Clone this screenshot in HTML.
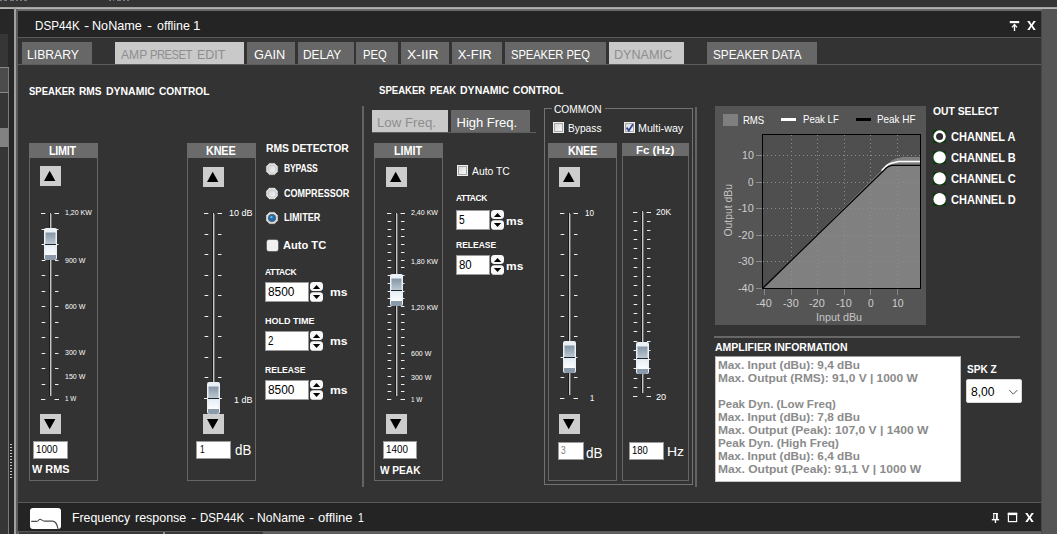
<!DOCTYPE html>
<html lang="en"><head><meta charset="utf-8"><title>DSP44K - NoName - offline 1</title>
<style>
html,body{margin:0;padding:0;background:#333333}
body{width:1057px;height:534px;overflow:hidden;background:#333333;position:relative;font-family:"Liberation Sans", sans-serif}
div,svg,span.t{position:absolute;display:block}
span.t{white-space:nowrap;transform-origin:0 50%}
</style></head><body>
<svg style="left:0;top:0" width="0" height="0"><defs><linearGradient id="tg1" x1="0" y1="0" x2="0" y2="1"><stop offset="0" stop-color="#8494a4"/><stop offset="1" stop-color="#bcc8d2"/></linearGradient><linearGradient id="tg2" x1="0" y1="0" x2="0" y2="1"><stop offset="0" stop-color="#e4edf5"/><stop offset="1" stop-color="#fbfdfe"/></linearGradient><linearGradient id="rg" x1="0" y1="0" x2="1" y2="1"><stop offset="0" stop-color="#c9d1d8"/><stop offset="0.55" stop-color="#e3e7ea"/><stop offset="1" stop-color="#f6f7f8"/></linearGradient></defs></svg>
<div style="left:0px;top:0px;width:1057px;height:7px;background:#343434;"></div>
<div style="left:0px;top:0px;width:2px;height:1px;background:#777d86;"></div>
<div style="left:4px;top:0px;width:3px;height:1px;background:#777d86;"></div>
<div style="left:10px;top:0px;width:4px;height:1px;background:#777d86;"></div>
<div style="left:16px;top:0px;width:2px;height:1px;background:#777d86;"></div>
<div style="left:20px;top:0px;width:2px;height:1px;background:#777d86;"></div>
<div style="left:24px;top:0px;width:3px;height:1px;background:#777d86;"></div>
<div style="left:109px;top:0px;width:2px;height:1px;background:#777d86;"></div>
<div style="left:113px;top:0px;width:1px;height:1px;background:#777d86;"></div>
<div style="left:117px;top:0px;width:4px;height:1px;background:#777d86;"></div>
<div style="left:123px;top:0px;width:2px;height:1px;background:#777d86;"></div>
<div style="left:127px;top:0px;width:2px;height:1px;background:#777d86;"></div>
<div style="left:0px;top:9px;width:14px;height:525px;background:#272727;"></div>
<div style="left:0px;top:34px;width:8px;height:500px;background:#363636;"></div>
<div style="left:8px;top:67px;width:1px;height:467px;background:#7a7a7a;"></div>
<div style="left:0px;top:67px;width:9px;height:1px;background:#8a8a8a;"></div>
<div style="left:0px;top:68px;width:8px;height:24px;background:#4c4c4c;"></div>
<div style="left:0px;top:92px;width:9px;height:1px;background:#8a8a8a;"></div>
<div style="left:0px;top:128px;width:8px;height:19px;background:#828282;"></div>
<div style="left:10px;top:444px;width:2px;height:1px;background:#c8c8c8;"></div>
<div style="left:10px;top:447px;width:2px;height:1px;background:#c8c8c8;"></div>
<div style="left:10px;top:450px;width:2px;height:1px;background:#c8c8c8;"></div>
<div style="left:10px;top:453px;width:2px;height:1px;background:#c8c8c8;"></div>
<div style="left:10px;top:456px;width:2px;height:1px;background:#c8c8c8;"></div>
<div style="left:10px;top:459px;width:2px;height:1px;background:#c8c8c8;"></div>
<div style="left:10px;top:462px;width:2px;height:1px;background:#c8c8c8;"></div>
<div style="left:10px;top:465px;width:2px;height:1px;background:#c8c8c8;"></div>
<div style="left:10px;top:468px;width:2px;height:1px;background:#c8c8c8;"></div>
<div style="left:10px;top:471px;width:2px;height:1px;background:#c8c8c8;"></div>
<div style="left:10px;top:474px;width:2px;height:1px;background:#c8c8c8;"></div>
<div style="left:10px;top:477px;width:2px;height:1px;background:#c8c8c8;"></div>
<div style="left:0px;top:7px;width:1057px;height:1px;background:#a4a4a4;"></div>
<div style="left:0px;top:8px;width:1057px;height:1px;background:#b4b4b4;"></div>
<div style="left:14px;top:7px;width:2px;height:527px;background:#a0a0a0;"></div>
<div style="left:16px;top:9px;width:1026px;height:2px;background:#686868;"></div>
<div style="left:16px;top:9px;width:2px;height:525px;background:#5c5c5c;"></div>
<div style="left:1041px;top:11px;width:1px;height:523px;background:#474747;"></div>
<div style="left:1042px;top:9px;width:15px;height:525px;background:#555555;"></div>
<div style="left:18px;top:11px;width:1023px;height:26px;background:#242424;"></div>
<div style="left:18px;top:37px;width:1023px;height:1px;background:#5a5a5a;"></div>
<div style="left:18px;top:38px;width:1023px;height:464px;background:#333333;"></div>
<div style="left:18px;top:502px;width:1023px;height:1px;background:#5a5a5a;"></div>
<div style="left:18px;top:503px;width:1023px;height:28px;background:#242424;"></div>
<div style="left:18px;top:531px;width:1023px;height:1px;background:#585858;"></div>
<div style="left:18px;top:532px;width:1023px;height:2px;background:#606060;"></div>
<div style="left:18px;top:532px;width:145px;height:2px;background:#3a3a3a;"></div>
<div style="left:165px;top:532px;width:98px;height:2px;background:#3a3a3a;"></div>
<div style="left:18px;top:532px;width:1px;height:2px;background:#6a6a6a;"></div>
<div style="left:163px;top:532px;width:2px;height:2px;background:#8a8a8a;"></div>
<span class="t" style="left:34.60px;top:18px;font-size:13px;line-height:15px;height:15px;color:#fff;transform:scaleX(0.8965);">DSP44K</span>
<span class="t" style="left:84.30px;top:18px;font-size:13px;line-height:15px;height:15px;color:#fff;transform:scaleX(1.2000);">-</span>
<span class="t" style="left:92.43px;top:18px;font-size:13px;line-height:15px;height:15px;color:#fff;transform:scaleX(0.9707);">NoName</span>
<span class="t" style="left:147.20px;top:18px;font-size:13px;line-height:15px;height:15px;color:#fff;transform:scaleX(1.1750);">-</span>
<span class="t" style="left:156.60px;top:18px;font-size:13px;line-height:15px;height:15px;color:#fff;transform:scaleX(0.9554);">offline</span>
<span class="t" style="left:193.30px;top:18px;font-size:13px;line-height:15px;height:15px;color:#fff;transform:scaleX(1.0286);">1</span>
<span class="t" style="left:71.65px;top:510px;font-size:13px;line-height:15px;height:15px;color:#fff;transform:scaleX(0.9471);">Frequency</span>
<span class="t" style="left:135.10px;top:510px;font-size:13px;line-height:15px;height:15px;color:#fff;transform:scaleX(0.9578);">response</span>
<span class="t" style="left:191.30px;top:510px;font-size:13px;line-height:15px;height:15px;color:#fff;transform:scaleX(1.2250);">-</span>
<span class="t" style="left:199.82px;top:510px;font-size:13px;line-height:15px;height:15px;color:#fff;transform:scaleX(0.8843);">DSP44K</span>
<span class="t" style="left:249.20px;top:510px;font-size:13px;line-height:15px;height:15px;color:#fff;transform:scaleX(1.1750);">-</span>
<span class="t" style="left:257.07px;top:510px;font-size:13px;line-height:15px;height:15px;color:#fff;transform:scaleX(0.9328);">NoName</span>
<span class="t" style="left:309.20px;top:510px;font-size:13px;line-height:15px;height:15px;color:#fff;transform:scaleX(1.2000);">-</span>
<span class="t" style="left:318.30px;top:510px;font-size:13px;line-height:15px;height:15px;color:#fff;transform:scaleX(1.0051);">offline</span>
<span class="t" style="left:358.40px;top:510px;font-size:13px;line-height:15px;height:15px;color:#fff;transform:scaleX(0.8000);">1</span>
<svg style="left:30px;top:508px" width="31" height="21" viewBox="0 0 31 21"><rect x="0" y="0" width="31" height="21" rx="3" ry="3" fill="#fff"/><path d="M1.2 13.4 H6.8 C8.6 13.4 8.6 11.3 10 11.3 C11.6 11.3 12.4 13.1 14.4 13.1 H22.6 C26 13.1 27 16.5 28.1 21" fill="none" stroke="#4a4a4a" stroke-width="1.1"/></svg>
<svg style="left:1008px;top:19px" width="14" height="14" viewBox="0 0 14 14"><rect x="1.8" y="2" width="9.4" height="2.2" fill="#fff"/><path d="M4.0 8.4 L6.5 5.6 L9.0 8.4" fill="none" stroke="#fff" stroke-width="1.3"/><rect x="5.8" y="5.6" width="1.4" height="6.4" fill="#fff"/></svg>
<svg style="left:1027.2px;top:21px" width="9" height="9.1" viewBox="0 0 8.6 9"><polygon points="0,0 2.3,0 4.3,3.1 6.3,0 8.6,0 5.45,4.45 8.6,9 6.3,9 4.3,5.8 2.3,9 0,9 3.15,4.45" fill="#fff"/></svg>
<svg style="left:989px;top:511px" width="14" height="14" viewBox="0 0 14 14"><rect x="4.2" y="2" width="4.6" height="1.1" fill="#fff"/><rect x="4.2" y="2" width="1.1" height="6.4" fill="#fff"/><rect x="6.9" y="2" width="1.9" height="6.4" fill="#fff"/><rect x="2.8" y="8" width="7.3" height="1.4" fill="#fff"/><rect x="5.8" y="9" width="1.3" height="3" fill="#fff"/></svg>
<svg style="left:1006px;top:511px" width="14" height="14" viewBox="0 0 14 14"><rect x="2.4" y="2.4" width="8.2" height="8.2" fill="none" stroke="#fff" stroke-width="1.2"/><rect x="1.8" y="1.8" width="9.4" height="2.3" fill="#fff"/></svg>
<svg style="left:1025px;top:513px" width="9" height="9.2" viewBox="0 0 8.6 9"><polygon points="0,0 2.3,0 4.3,3.1 6.3,0 8.6,0 5.45,4.45 8.6,9 6.3,9 4.3,5.8 2.3,9 0,9 3.15,4.45" fill="#fff"/></svg>
<div style="left:18px;top:64px;width:1023px;height:1px;background:#5e5e5e;"></div>
<div style="left:22px;top:42px;width:70px;height:22px;background:#676767;"></div>
<span class="t" style="left:27.46px;top:47px;font-size:13px;line-height:15px;height:15px;color:#fff;transform:scaleX(0.9356);">LIBRARY</span>
<div style="left:115px;top:42px;width:129px;height:22px;background:#c9c9c9;"></div>
<span class="t" style="left:121.20px;top:47px;font-size:13px;line-height:15px;height:15px;color:#8e8e8e;transform:scaleX(0.9309);">AMP</span>
<span class="t" style="left:149.84px;top:47px;font-size:13px;line-height:15px;height:15px;color:#8e8e8e;letter-spacing:-0.563px;transform:scaleX(0.8600);">PRESET</span>
<span class="t" style="left:197.44px;top:47px;font-size:13px;line-height:15px;height:15px;color:#8e8e8e;transform:scaleX(0.9557);">EDIT</span>
<div style="left:247px;top:42px;width:48px;height:22px;background:#676767;"></div>
<span class="t" style="left:253.50px;top:47px;font-size:13px;line-height:15px;height:15px;color:#fff;transform:scaleX(0.9811);">GAIN</span>
<div style="left:298px;top:42px;width:56px;height:22px;background:#676767;"></div>
<span class="t" style="left:303.08px;top:47px;font-size:13px;line-height:15px;height:15px;color:#fff;transform:scaleX(0.9172);">DELAY</span>
<div style="left:356px;top:42px;width:42px;height:22px;background:#676767;"></div>
<span class="t" style="left:362.53px;top:47px;font-size:13px;line-height:15px;height:15px;color:#fff;transform:scaleX(0.8655);">PEQ</span>
<div style="left:401px;top:42px;width:48px;height:22px;background:#676767;"></div>
<span class="t" style="left:406.80px;top:47px;font-size:13px;line-height:15px;height:15px;color:#fff;transform:scaleX(1.0676);">X-IIR</span>
<div style="left:452px;top:42px;width:50px;height:22px;background:#676767;"></div>
<span class="t" style="left:457.70px;top:47px;font-size:13px;line-height:15px;height:15px;color:#fff;">X-FIR</span>
<div style="left:505px;top:42px;width:101px;height:22px;background:#676767;"></div>
<span class="t" style="left:510.80px;top:47px;font-size:13px;line-height:15px;height:15px;color:#fff;letter-spacing:-0.074px;transform:scaleX(0.8600);">SPEAKER PEQ</span>
<div style="left:609px;top:42px;width:75px;height:22px;background:#c9c9c9;"></div>
<span class="t" style="left:614.23px;top:47px;font-size:13px;line-height:15px;height:15px;color:#8e8e8e;transform:scaleX(0.9700);">DYNAMIC</span>
<div style="left:707px;top:42px;width:110px;height:22px;background:#676767;"></div>
<span class="t" style="left:713.20px;top:47px;font-size:13px;line-height:15px;height:15px;color:#fff;transform:scaleX(0.9052);">SPEAKER DATA</span>
<span class="t" style="left:28.70px;top:85px;font-size:11px;line-height:12px;height:12px;color:#fff;font-weight:bold;transform:scaleX(0.8641);">SPEAKER</span>
<span class="t" style="left:78.90px;top:85px;font-size:11px;line-height:12px;height:12px;color:#fff;font-weight:bold;transform:scaleX(0.9250);">RMS</span>
<span class="t" style="left:105.70px;top:85px;font-size:11px;line-height:12px;height:12px;color:#fff;font-weight:bold;transform:scaleX(0.9516);">DYNAMIC</span>
<span class="t" style="left:158.70px;top:85px;font-size:11px;line-height:12px;height:12px;color:#fff;font-weight:bold;transform:scaleX(0.9275);">CONTROL</span>
<div style="left:29px;top:143px;width:69px;height:338px;background:transparent;border:1px solid #666;box-sizing:border-box"></div>
<div style="left:29px;top:143px;width:69px;height:15px;background:#6b6b6b;"></div>
<span class="t" style="left:49.00px;top:144px;font-size:12.6px;line-height:14px;height:14px;color:#fff;font-weight:bold;letter-spacing:-0.301px;transform:scaleX(0.8600);">LIMIT</span>
<div style="left:40px;top:166px;width:21px;height:20px;background:#cdcdcd;"></div>
<svg style="left:40px;top:166px" width="21" height="20"><polygon points="4.0,15 15.4,15 9.7,4.8" fill="#000"/></svg>
<div style="left:41px;top:213px;width:4px;height:1px;background:#f0f0f0;"></div>
<div style="left:45px;top:213px;width:1px;height:1px;background:#707070;"></div>
<div style="left:54px;top:213px;width:1px;height:1px;background:#909090;"></div>
<div style="left:55px;top:213px;width:4px;height:1px;background:#f0f0f0;"></div>
<div style="left:41px;top:229px;width:1px;height:1px;background:#808080;"></div>
<div style="left:42px;top:229px;width:3px;height:1px;background:#f0f0f0;"></div>
<div style="left:45px;top:229px;width:1px;height:1px;background:#686868;"></div>
<div style="left:55px;top:229px;width:3px;height:1px;background:#f0f0f0;"></div>
<div style="left:58px;top:229px;width:1px;height:1px;background:#8c8c8c;"></div>
<div style="left:41px;top:244px;width:1px;height:1px;background:#808080;"></div>
<div style="left:42px;top:244px;width:3px;height:1px;background:#f0f0f0;"></div>
<div style="left:45px;top:244px;width:1px;height:1px;background:#686868;"></div>
<div style="left:55px;top:244px;width:3px;height:1px;background:#f0f0f0;"></div>
<div style="left:58px;top:244px;width:1px;height:1px;background:#8c8c8c;"></div>
<div style="left:41px;top:260px;width:1px;height:1px;background:#808080;"></div>
<div style="left:42px;top:260px;width:3px;height:1px;background:#f0f0f0;"></div>
<div style="left:45px;top:260px;width:1px;height:1px;background:#686868;"></div>
<div style="left:55px;top:260px;width:3px;height:1px;background:#f0f0f0;"></div>
<div style="left:58px;top:260px;width:1px;height:1px;background:#8c8c8c;"></div>
<div style="left:41px;top:275px;width:1px;height:1px;background:#808080;"></div>
<div style="left:42px;top:275px;width:3px;height:1px;background:#f0f0f0;"></div>
<div style="left:45px;top:275px;width:1px;height:1px;background:#686868;"></div>
<div style="left:55px;top:275px;width:3px;height:1px;background:#f0f0f0;"></div>
<div style="left:58px;top:275px;width:1px;height:1px;background:#8c8c8c;"></div>
<div style="left:41px;top:291px;width:1px;height:1px;background:#808080;"></div>
<div style="left:42px;top:291px;width:3px;height:1px;background:#f0f0f0;"></div>
<div style="left:45px;top:291px;width:1px;height:1px;background:#686868;"></div>
<div style="left:55px;top:291px;width:3px;height:1px;background:#f0f0f0;"></div>
<div style="left:58px;top:291px;width:1px;height:1px;background:#8c8c8c;"></div>
<div style="left:41px;top:306px;width:1px;height:1px;background:#808080;"></div>
<div style="left:42px;top:306px;width:3px;height:1px;background:#f0f0f0;"></div>
<div style="left:45px;top:306px;width:1px;height:1px;background:#686868;"></div>
<div style="left:55px;top:306px;width:3px;height:1px;background:#f0f0f0;"></div>
<div style="left:58px;top:306px;width:1px;height:1px;background:#8c8c8c;"></div>
<div style="left:41px;top:322px;width:1px;height:1px;background:#808080;"></div>
<div style="left:42px;top:322px;width:3px;height:1px;background:#f0f0f0;"></div>
<div style="left:45px;top:322px;width:1px;height:1px;background:#686868;"></div>
<div style="left:55px;top:322px;width:3px;height:1px;background:#f0f0f0;"></div>
<div style="left:58px;top:322px;width:1px;height:1px;background:#8c8c8c;"></div>
<div style="left:41px;top:337px;width:1px;height:1px;background:#808080;"></div>
<div style="left:42px;top:337px;width:3px;height:1px;background:#f0f0f0;"></div>
<div style="left:45px;top:337px;width:1px;height:1px;background:#686868;"></div>
<div style="left:55px;top:337px;width:3px;height:1px;background:#f0f0f0;"></div>
<div style="left:58px;top:337px;width:1px;height:1px;background:#8c8c8c;"></div>
<div style="left:41px;top:353px;width:1px;height:1px;background:#808080;"></div>
<div style="left:42px;top:353px;width:3px;height:1px;background:#f0f0f0;"></div>
<div style="left:45px;top:353px;width:1px;height:1px;background:#686868;"></div>
<div style="left:55px;top:353px;width:3px;height:1px;background:#f0f0f0;"></div>
<div style="left:58px;top:353px;width:1px;height:1px;background:#8c8c8c;"></div>
<div style="left:41px;top:368px;width:1px;height:1px;background:#808080;"></div>
<div style="left:42px;top:368px;width:3px;height:1px;background:#f0f0f0;"></div>
<div style="left:45px;top:368px;width:1px;height:1px;background:#686868;"></div>
<div style="left:55px;top:368px;width:3px;height:1px;background:#f0f0f0;"></div>
<div style="left:58px;top:368px;width:1px;height:1px;background:#8c8c8c;"></div>
<div style="left:41px;top:384px;width:1px;height:1px;background:#808080;"></div>
<div style="left:42px;top:384px;width:3px;height:1px;background:#f0f0f0;"></div>
<div style="left:45px;top:384px;width:1px;height:1px;background:#686868;"></div>
<div style="left:55px;top:384px;width:3px;height:1px;background:#f0f0f0;"></div>
<div style="left:58px;top:384px;width:1px;height:1px;background:#8c8c8c;"></div>
<div style="left:41px;top:399px;width:4px;height:1px;background:#f0f0f0;"></div>
<div style="left:45px;top:399px;width:1px;height:1px;background:#707070;"></div>
<div style="left:54px;top:399px;width:1px;height:1px;background:#909090;"></div>
<div style="left:55px;top:399px;width:4px;height:1px;background:#f0f0f0;"></div>
<div style="left:49px;top:213px;width:1px;height:183.0px;background:#1a1a1a;"></div>
<div style="left:50px;top:213px;width:1px;height:183.0px;background:#c6c6c6;"></div>
<div style="left:51px;top:214px;width:1px;height:182.0px;background:#6e6e6e;"></div>
<svg style="left:44px;top:228px" width="13" height="32" viewBox="0 0 13 32"><rect x="0" y="0" width="13" height="32" rx="2" ry="2" fill="#e9f0f6"/><rect x="1.5" y="4.5" width="10" height="11.5" fill="url(#tg1)"/><rect x="1" y="16" width="11" height="1" fill="#20262c"/><rect x="1.5" y="17" width="10" height="10" fill="url(#tg2)"/><path d="M1 27 H12 V30 Q12 32 10 32 H3 Q1 32 1 30 Z" fill="#8a9aab"/></svg>
<span class="t" style="left:64.50px;top:208px;font-size:7.2px;line-height:9px;height:9px;color:#fff;transform:scaleX(0.9719);">1,20 KW</span>
<span class="t" style="left:64.50px;top:256px;font-size:7.2px;line-height:9px;height:9px;color:#fff;transform:scaleX(0.9767);">900 W</span>
<span class="t" style="left:64.50px;top:302px;font-size:7.2px;line-height:9px;height:9px;color:#fff;transform:scaleX(0.9767);">600 W</span>
<span class="t" style="left:64.50px;top:348px;font-size:7.2px;line-height:9px;height:9px;color:#fff;transform:scaleX(0.9767);">300 W</span>
<span class="t" style="left:64.50px;top:372px;font-size:7.2px;line-height:9px;height:9px;color:#fff;transform:scaleX(0.9767);">150 W</span>
<span class="t" style="left:64.50px;top:394px;font-size:7.2px;line-height:9px;height:9px;color:#fff;transform:scaleX(0.8850);">1 W</span>
<div style="left:40px;top:414px;width:21px;height:20px;background:#cdcdcd;"></div>
<svg style="left:40px;top:414px" width="21" height="20"><polygon points="4.0,5 15.4,5 9.7,15.2" fill="#000"/></svg>
<div style="left:33px;top:441px;width:35px;height:18px;background:#fff;border:1px solid #9a9a9a;box-sizing:border-box"></div>
<span class="t" style="left:36.00px;top:443px;font-size:10.5px;line-height:12px;height:12px;color:#000;transform:scaleX(0.9269);">1000</span>
<span class="t" style="left:32.00px;top:463px;font-size:11px;line-height:12px;height:12px;color:#fff;font-weight:bold;transform:scaleX(0.9881);">W RMS</span>
<div style="left:187px;top:143px;width:69px;height:338px;background:transparent;border:1px solid #666;box-sizing:border-box"></div>
<div style="left:187px;top:143px;width:69px;height:15px;background:#6b6b6b;"></div>
<span class="t" style="left:206.30px;top:144px;font-size:12.6px;line-height:14px;height:14px;color:#fff;font-weight:bold;letter-spacing:-0.173px;transform:scaleX(0.8600);">KNEE</span>
<div style="left:203px;top:167px;width:21px;height:20px;background:#cdcdcd;"></div>
<svg style="left:203px;top:167px" width="21" height="20"><polygon points="4.0,15 15.4,15 9.7,4.8" fill="#000"/></svg>
<div style="left:204px;top:213px;width:4px;height:1px;background:#f0f0f0;"></div>
<div style="left:208px;top:213px;width:1px;height:1px;background:#707070;"></div>
<div style="left:217px;top:213px;width:1px;height:1px;background:#909090;"></div>
<div style="left:218px;top:213px;width:4px;height:1px;background:#f0f0f0;"></div>
<div style="left:204px;top:234px;width:1px;height:1px;background:#808080;"></div>
<div style="left:205px;top:234px;width:3px;height:1px;background:#f0f0f0;"></div>
<div style="left:208px;top:234px;width:1px;height:1px;background:#686868;"></div>
<div style="left:218px;top:234px;width:3px;height:1px;background:#f0f0f0;"></div>
<div style="left:221px;top:234px;width:1px;height:1px;background:#8c8c8c;"></div>
<div style="left:204px;top:254px;width:1px;height:1px;background:#808080;"></div>
<div style="left:205px;top:254px;width:3px;height:1px;background:#f0f0f0;"></div>
<div style="left:208px;top:254px;width:1px;height:1px;background:#686868;"></div>
<div style="left:218px;top:254px;width:3px;height:1px;background:#f0f0f0;"></div>
<div style="left:221px;top:254px;width:1px;height:1px;background:#8c8c8c;"></div>
<div style="left:204px;top:275px;width:1px;height:1px;background:#808080;"></div>
<div style="left:205px;top:275px;width:3px;height:1px;background:#f0f0f0;"></div>
<div style="left:208px;top:275px;width:1px;height:1px;background:#686868;"></div>
<div style="left:218px;top:275px;width:3px;height:1px;background:#f0f0f0;"></div>
<div style="left:221px;top:275px;width:1px;height:1px;background:#8c8c8c;"></div>
<div style="left:204px;top:295px;width:1px;height:1px;background:#808080;"></div>
<div style="left:205px;top:295px;width:3px;height:1px;background:#f0f0f0;"></div>
<div style="left:208px;top:295px;width:1px;height:1px;background:#686868;"></div>
<div style="left:218px;top:295px;width:3px;height:1px;background:#f0f0f0;"></div>
<div style="left:221px;top:295px;width:1px;height:1px;background:#8c8c8c;"></div>
<div style="left:204px;top:316px;width:1px;height:1px;background:#808080;"></div>
<div style="left:205px;top:316px;width:3px;height:1px;background:#f0f0f0;"></div>
<div style="left:208px;top:316px;width:1px;height:1px;background:#686868;"></div>
<div style="left:218px;top:316px;width:3px;height:1px;background:#f0f0f0;"></div>
<div style="left:221px;top:316px;width:1px;height:1px;background:#8c8c8c;"></div>
<div style="left:204px;top:336px;width:1px;height:1px;background:#808080;"></div>
<div style="left:205px;top:336px;width:3px;height:1px;background:#f0f0f0;"></div>
<div style="left:208px;top:336px;width:1px;height:1px;background:#686868;"></div>
<div style="left:218px;top:336px;width:3px;height:1px;background:#f0f0f0;"></div>
<div style="left:221px;top:336px;width:1px;height:1px;background:#8c8c8c;"></div>
<div style="left:204px;top:357px;width:1px;height:1px;background:#808080;"></div>
<div style="left:205px;top:357px;width:3px;height:1px;background:#f0f0f0;"></div>
<div style="left:208px;top:357px;width:1px;height:1px;background:#686868;"></div>
<div style="left:218px;top:357px;width:3px;height:1px;background:#f0f0f0;"></div>
<div style="left:221px;top:357px;width:1px;height:1px;background:#8c8c8c;"></div>
<div style="left:204px;top:377px;width:1px;height:1px;background:#808080;"></div>
<div style="left:205px;top:377px;width:3px;height:1px;background:#f0f0f0;"></div>
<div style="left:208px;top:377px;width:1px;height:1px;background:#686868;"></div>
<div style="left:218px;top:377px;width:3px;height:1px;background:#f0f0f0;"></div>
<div style="left:221px;top:377px;width:1px;height:1px;background:#8c8c8c;"></div>
<div style="left:204px;top:398px;width:4px;height:1px;background:#f0f0f0;"></div>
<div style="left:208px;top:398px;width:1px;height:1px;background:#707070;"></div>
<div style="left:217px;top:398px;width:1px;height:1px;background:#909090;"></div>
<div style="left:218px;top:398px;width:4px;height:1px;background:#f0f0f0;"></div>
<div style="left:212px;top:213px;width:1px;height:181.95000000000005px;background:#1a1a1a;"></div>
<div style="left:213px;top:213px;width:1px;height:181.95000000000005px;background:#c6c6c6;"></div>
<div style="left:214px;top:214px;width:1px;height:180.95000000000005px;background:#6e6e6e;"></div>
<svg style="left:207px;top:382px" width="13" height="32" viewBox="0 0 13 32"><rect x="0" y="0" width="13" height="32" rx="2" ry="2" fill="#e9f0f6"/><rect x="1.5" y="4.5" width="10" height="11.5" fill="url(#tg1)"/><rect x="1" y="16" width="11" height="1" fill="#20262c"/><rect x="1.5" y="17" width="10" height="10" fill="url(#tg2)"/><path d="M1 27 H12 V30 Q12 32 10 32 H3 Q1 32 1 30 Z" fill="#8a9aab"/></svg>
<span class="t" style="left:228.80px;top:207px;font-size:9.4px;line-height:11px;height:11px;color:#fff;transform:scaleX(0.9568);">10 dB</span>
<span class="t" style="left:234.00px;top:395px;font-size:9.2px;line-height:10px;height:10px;color:#fff;transform:scaleX(0.9695);">1 dB</span>
<div style="left:203px;top:414px;width:21px;height:20px;background:#cdcdcd;"></div>
<svg style="left:203px;top:414px" width="21" height="20"><polygon points="4.0,5 15.4,5 9.7,15.2" fill="#000"/></svg>
<div style="left:196px;top:441px;width:35px;height:18px;background:#fff;border:1px solid #9a9a9a;box-sizing:border-box"></div>
<span class="t" style="left:199.70px;top:443px;font-size:10.5px;line-height:12px;height:12px;color:#000;transform:scaleX(0.8000);">1</span>
<span class="t" style="left:235.00px;top:442px;font-size:14px;line-height:16px;height:16px;color:#fff;transform:scaleX(0.9532);">dB</span>
<span class="t" style="left:266.20px;top:142px;font-size:11px;line-height:12px;height:12px;color:#fff;font-weight:bold;transform:scaleX(0.9424);">RMS DETECTOR</span>
<svg style="left:264px;top:161px" width="16" height="17" viewBox="0 0 16 17"><polygon points="5.40,1.80 10.60,1.80 14.20,5.40 14.20,10.60 10.60,14.20 5.40,14.20 1.80,10.60 1.80,5.40" fill="#f1f1f1" stroke="#262626" stroke-width="0.9" stroke-linejoin="round"/><circle cx="8" cy="8" r="4.7" fill="none" stroke="#d9d9d9" stroke-width="1.2"/><circle cx="8" cy="8" r="3.9" fill="url(#rg)" stroke="#bcbcbc" stroke-width="0.6"/></svg>
<span class="t" style="left:284.00px;top:163px;font-size:10px;line-height:11px;height:11px;color:#fff;font-weight:bold;letter-spacing:-0.235px;transform:scaleX(0.8600);">BYPASS</span>
<svg style="left:264px;top:185px" width="16" height="17" viewBox="0 0 16 17"><polygon points="5.40,2.30 10.60,2.30 14.20,5.90 14.20,11.10 10.60,14.70 5.40,14.70 1.80,11.10 1.80,5.90" fill="#f1f1f1" stroke="#262626" stroke-width="0.9" stroke-linejoin="round"/><circle cx="8" cy="8.5" r="4.7" fill="none" stroke="#d9d9d9" stroke-width="1.2"/><circle cx="8" cy="8.5" r="3.9" fill="url(#rg)" stroke="#bcbcbc" stroke-width="0.6"/></svg>
<span class="t" style="left:284.00px;top:188px;font-size:10px;line-height:11px;height:11px;color:#fff;font-weight:bold;transform:scaleX(0.9040);">COMPRESSOR</span>
<svg style="left:264px;top:210px" width="16" height="17" viewBox="0 0 16 17"><polygon points="5.40,1.80 10.60,1.80 14.20,5.40 14.20,10.60 10.60,14.20 5.40,14.20 1.80,10.60 1.80,5.40" fill="#f1f1f1" stroke="#262626" stroke-width="0.9" stroke-linejoin="round"/><circle cx="8" cy="8" r="4.7" fill="none" stroke="#d9d9d9" stroke-width="1.2"/><circle cx="8" cy="8" r="4.0" fill="#565c64"/><circle cx="8" cy="8" r="3.1" fill="#1b6db4"/><circle cx="7.4" cy="7.1" r="1.2" fill="#6bb6ea"/></svg>
<span class="t" style="left:284.00px;top:212px;font-size:10px;line-height:11px;height:11px;color:#fff;font-weight:bold;transform:scaleX(0.9075);">LIMITER</span>
<div style="left:267px;top:240px;width:11px;height:11px;background:#f0f0f0;border-radius:2px;box-shadow:0 0 0 0.5px #999"></div>
<span class="t" style="left:283.20px;top:239px;font-size:11px;line-height:12px;height:12px;color:#fff;font-weight:bold;transform:scaleX(1.0089);">Auto TC</span>
<span class="t" style="left:265.00px;top:266px;font-size:9.8px;line-height:11px;height:11px;color:#fff;font-weight:bold;letter-spacing:-0.422px;transform:scaleX(0.8600);">ATTACK</span>
<div style="left:265px;top:282px;width:44px;height:20px;background:#fff;border:1px solid #9a9a9a;box-sizing:border-box"></div>
<span class="t" style="left:267.80px;top:285px;font-size:12px;line-height:14px;height:14px;color:#000;transform:scaleX(0.9918);">8500</span>
<svg style="left:310px;top:282px" width="13" height="20" viewBox="0 0 13 20"><rect x="0" y="0" width="13" height="8.9" rx="3.4" fill="#f8f8f8"/><rect x="0" y="10.2" width="13" height="9.6" rx="3.4" fill="#f8f8f8"/><polygon points="2.9,6.9 10.2,6.9 6.55,3.0" fill="#000"/><polygon points="2.9,13.1 10.2,13.1 6.55,17.0" fill="#000"/></svg>
<span class="t" style="left:330.20px;top:286px;font-size:11px;line-height:12px;height:12px;color:#fff;font-weight:bold;transform:scaleX(1.1026);">ms</span>
<span class="t" style="left:265.00px;top:315px;font-size:9.8px;line-height:11px;height:11px;color:#fff;font-weight:bold;transform:scaleX(0.9201);">HOLD TIME</span>
<div style="left:265px;top:331px;width:44px;height:20px;background:#fff;border:1px solid #9a9a9a;box-sizing:border-box"></div>
<span class="t" style="left:267.80px;top:334px;font-size:12px;line-height:14px;height:14px;color:#000;transform:scaleX(0.8143);">2</span>
<svg style="left:310px;top:331px" width="13" height="20" viewBox="0 0 13 20"><rect x="0" y="0" width="13" height="8.9" rx="3.4" fill="#f8f8f8"/><rect x="0" y="10.2" width="13" height="9.6" rx="3.4" fill="#f8f8f8"/><polygon points="2.9,6.9 10.2,6.9 6.55,3.0" fill="#000"/><polygon points="2.9,13.1 10.2,13.1 6.55,17.0" fill="#000"/></svg>
<span class="t" style="left:330.20px;top:335px;font-size:11px;line-height:12px;height:12px;color:#fff;font-weight:bold;transform:scaleX(1.1026);">ms</span>
<span class="t" style="left:265.00px;top:364px;font-size:9.8px;line-height:11px;height:11px;color:#fff;font-weight:bold;transform:scaleX(0.8730);">RELEASE</span>
<div style="left:265px;top:380px;width:44px;height:20px;background:#fff;border:1px solid #9a9a9a;box-sizing:border-box"></div>
<span class="t" style="left:267.80px;top:383px;font-size:12px;line-height:14px;height:14px;color:#000;transform:scaleX(0.9918);">8500</span>
<svg style="left:310px;top:380px" width="13" height="20" viewBox="0 0 13 20"><rect x="0" y="0" width="13" height="8.9" rx="3.4" fill="#f8f8f8"/><rect x="0" y="10.2" width="13" height="9.6" rx="3.4" fill="#f8f8f8"/><polygon points="2.9,6.9 10.2,6.9 6.55,3.0" fill="#000"/><polygon points="2.9,13.1 10.2,13.1 6.55,17.0" fill="#000"/></svg>
<span class="t" style="left:330.20px;top:384px;font-size:11px;line-height:12px;height:12px;color:#fff;font-weight:bold;transform:scaleX(1.1026);">ms</span>
<div style="left:362px;top:106px;width:2px;height:381px;background:#636363;"></div>
<span class="t" style="left:379.20px;top:84px;font-size:11px;line-height:12px;height:12px;color:#fff;font-weight:bold;transform:scaleX(0.8697);">SPEAKER</span>
<span class="t" style="left:429.70px;top:84px;font-size:11px;line-height:12px;height:12px;color:#fff;font-weight:bold;letter-spacing:-0.090px;transform:scaleX(0.8600);">PEAK</span>
<span class="t" style="left:460.00px;top:84px;font-size:11px;line-height:12px;height:12px;color:#fff;font-weight:bold;transform:scaleX(0.9574);">DYNAMIC</span>
<span class="t" style="left:513.30px;top:84px;font-size:11px;line-height:12px;height:12px;color:#fff;font-weight:bold;transform:scaleX(0.9293);">CONTROL</span>
<div style="left:372px;top:110px;width:76px;height:22px;background:#c9c9c9;"></div>
<div style="left:451px;top:110px;width:79px;height:22px;background:#676767;"></div>
<div style="left:372px;top:132px;width:164px;height:1px;background:#5e5e5e;"></div>
<span class="t" style="left:377.28px;top:115px;font-size:13px;line-height:15px;height:15px;color:#8e8e8e;transform:scaleX(1.0198);">Low Freq.</span>
<span class="t" style="left:456.50px;top:115px;font-size:13px;line-height:15px;height:15px;color:#fff;">High Freq.</span>
<div style="left:374px;top:143px;width:69px;height:338px;background:transparent;border:1px solid #666;box-sizing:border-box"></div>
<div style="left:374px;top:143px;width:69px;height:15px;background:#6b6b6b;"></div>
<span class="t" style="left:393.60px;top:144px;font-size:12.6px;line-height:14px;height:14px;color:#fff;font-weight:bold;letter-spacing:-0.040px;transform:scaleX(0.8600);">LIMIT</span>
<div style="left:386px;top:167px;width:21px;height:20px;background:#cdcdcd;"></div>
<svg style="left:386px;top:167px" width="21" height="20"><polygon points="4.0,15 15.4,15 9.7,4.8" fill="#000"/></svg>
<div style="left:387px;top:213px;width:4px;height:1px;background:#f0f0f0;"></div>
<div style="left:391px;top:213px;width:1px;height:1px;background:#707070;"></div>
<div style="left:400px;top:213px;width:1px;height:1px;background:#909090;"></div>
<div style="left:401px;top:213px;width:4px;height:1px;background:#f0f0f0;"></div>
<div style="left:387px;top:221px;width:1px;height:1px;background:#808080;"></div>
<div style="left:388px;top:221px;width:3px;height:1px;background:#f0f0f0;"></div>
<div style="left:391px;top:221px;width:1px;height:1px;background:#686868;"></div>
<div style="left:401px;top:221px;width:3px;height:1px;background:#f0f0f0;"></div>
<div style="left:404px;top:221px;width:1px;height:1px;background:#8c8c8c;"></div>
<div style="left:387px;top:229px;width:1px;height:1px;background:#808080;"></div>
<div style="left:388px;top:229px;width:3px;height:1px;background:#f0f0f0;"></div>
<div style="left:391px;top:229px;width:1px;height:1px;background:#686868;"></div>
<div style="left:401px;top:229px;width:3px;height:1px;background:#f0f0f0;"></div>
<div style="left:404px;top:229px;width:1px;height:1px;background:#8c8c8c;"></div>
<div style="left:387px;top:236px;width:1px;height:1px;background:#808080;"></div>
<div style="left:388px;top:236px;width:3px;height:1px;background:#f0f0f0;"></div>
<div style="left:391px;top:236px;width:1px;height:1px;background:#686868;"></div>
<div style="left:401px;top:236px;width:3px;height:1px;background:#f0f0f0;"></div>
<div style="left:404px;top:236px;width:1px;height:1px;background:#8c8c8c;"></div>
<div style="left:387px;top:244px;width:1px;height:1px;background:#808080;"></div>
<div style="left:388px;top:244px;width:3px;height:1px;background:#f0f0f0;"></div>
<div style="left:391px;top:244px;width:1px;height:1px;background:#686868;"></div>
<div style="left:401px;top:244px;width:3px;height:1px;background:#f0f0f0;"></div>
<div style="left:404px;top:244px;width:1px;height:1px;background:#8c8c8c;"></div>
<div style="left:387px;top:252px;width:1px;height:1px;background:#808080;"></div>
<div style="left:388px;top:252px;width:3px;height:1px;background:#f0f0f0;"></div>
<div style="left:391px;top:252px;width:1px;height:1px;background:#686868;"></div>
<div style="left:401px;top:252px;width:3px;height:1px;background:#f0f0f0;"></div>
<div style="left:404px;top:252px;width:1px;height:1px;background:#8c8c8c;"></div>
<div style="left:387px;top:260px;width:1px;height:1px;background:#808080;"></div>
<div style="left:388px;top:260px;width:3px;height:1px;background:#f0f0f0;"></div>
<div style="left:391px;top:260px;width:1px;height:1px;background:#686868;"></div>
<div style="left:401px;top:260px;width:3px;height:1px;background:#f0f0f0;"></div>
<div style="left:404px;top:260px;width:1px;height:1px;background:#8c8c8c;"></div>
<div style="left:387px;top:267px;width:1px;height:1px;background:#808080;"></div>
<div style="left:388px;top:267px;width:3px;height:1px;background:#f0f0f0;"></div>
<div style="left:391px;top:267px;width:1px;height:1px;background:#686868;"></div>
<div style="left:401px;top:267px;width:3px;height:1px;background:#f0f0f0;"></div>
<div style="left:404px;top:267px;width:1px;height:1px;background:#8c8c8c;"></div>
<div style="left:387px;top:275px;width:1px;height:1px;background:#808080;"></div>
<div style="left:388px;top:275px;width:3px;height:1px;background:#f0f0f0;"></div>
<div style="left:391px;top:275px;width:1px;height:1px;background:#686868;"></div>
<div style="left:401px;top:275px;width:3px;height:1px;background:#f0f0f0;"></div>
<div style="left:404px;top:275px;width:1px;height:1px;background:#8c8c8c;"></div>
<div style="left:387px;top:283px;width:1px;height:1px;background:#808080;"></div>
<div style="left:388px;top:283px;width:3px;height:1px;background:#f0f0f0;"></div>
<div style="left:391px;top:283px;width:1px;height:1px;background:#686868;"></div>
<div style="left:401px;top:283px;width:3px;height:1px;background:#f0f0f0;"></div>
<div style="left:404px;top:283px;width:1px;height:1px;background:#8c8c8c;"></div>
<div style="left:387px;top:291px;width:1px;height:1px;background:#808080;"></div>
<div style="left:388px;top:291px;width:3px;height:1px;background:#f0f0f0;"></div>
<div style="left:391px;top:291px;width:1px;height:1px;background:#686868;"></div>
<div style="left:401px;top:291px;width:3px;height:1px;background:#f0f0f0;"></div>
<div style="left:404px;top:291px;width:1px;height:1px;background:#8c8c8c;"></div>
<div style="left:387px;top:298px;width:1px;height:1px;background:#808080;"></div>
<div style="left:388px;top:298px;width:3px;height:1px;background:#f0f0f0;"></div>
<div style="left:391px;top:298px;width:1px;height:1px;background:#686868;"></div>
<div style="left:401px;top:298px;width:3px;height:1px;background:#f0f0f0;"></div>
<div style="left:404px;top:298px;width:1px;height:1px;background:#8c8c8c;"></div>
<div style="left:387px;top:306px;width:1px;height:1px;background:#808080;"></div>
<div style="left:388px;top:306px;width:3px;height:1px;background:#f0f0f0;"></div>
<div style="left:391px;top:306px;width:1px;height:1px;background:#686868;"></div>
<div style="left:401px;top:306px;width:3px;height:1px;background:#f0f0f0;"></div>
<div style="left:404px;top:306px;width:1px;height:1px;background:#8c8c8c;"></div>
<div style="left:387px;top:314px;width:1px;height:1px;background:#808080;"></div>
<div style="left:388px;top:314px;width:3px;height:1px;background:#f0f0f0;"></div>
<div style="left:391px;top:314px;width:1px;height:1px;background:#686868;"></div>
<div style="left:401px;top:314px;width:3px;height:1px;background:#f0f0f0;"></div>
<div style="left:404px;top:314px;width:1px;height:1px;background:#8c8c8c;"></div>
<div style="left:387px;top:322px;width:1px;height:1px;background:#808080;"></div>
<div style="left:388px;top:322px;width:3px;height:1px;background:#f0f0f0;"></div>
<div style="left:391px;top:322px;width:1px;height:1px;background:#686868;"></div>
<div style="left:401px;top:322px;width:3px;height:1px;background:#f0f0f0;"></div>
<div style="left:404px;top:322px;width:1px;height:1px;background:#8c8c8c;"></div>
<div style="left:387px;top:329px;width:1px;height:1px;background:#808080;"></div>
<div style="left:388px;top:329px;width:3px;height:1px;background:#f0f0f0;"></div>
<div style="left:391px;top:329px;width:1px;height:1px;background:#686868;"></div>
<div style="left:401px;top:329px;width:3px;height:1px;background:#f0f0f0;"></div>
<div style="left:404px;top:329px;width:1px;height:1px;background:#8c8c8c;"></div>
<div style="left:387px;top:337px;width:1px;height:1px;background:#808080;"></div>
<div style="left:388px;top:337px;width:3px;height:1px;background:#f0f0f0;"></div>
<div style="left:391px;top:337px;width:1px;height:1px;background:#686868;"></div>
<div style="left:401px;top:337px;width:3px;height:1px;background:#f0f0f0;"></div>
<div style="left:404px;top:337px;width:1px;height:1px;background:#8c8c8c;"></div>
<div style="left:387px;top:345px;width:1px;height:1px;background:#808080;"></div>
<div style="left:388px;top:345px;width:3px;height:1px;background:#f0f0f0;"></div>
<div style="left:391px;top:345px;width:1px;height:1px;background:#686868;"></div>
<div style="left:401px;top:345px;width:3px;height:1px;background:#f0f0f0;"></div>
<div style="left:404px;top:345px;width:1px;height:1px;background:#8c8c8c;"></div>
<div style="left:387px;top:353px;width:1px;height:1px;background:#808080;"></div>
<div style="left:388px;top:353px;width:3px;height:1px;background:#f0f0f0;"></div>
<div style="left:391px;top:353px;width:1px;height:1px;background:#686868;"></div>
<div style="left:401px;top:353px;width:3px;height:1px;background:#f0f0f0;"></div>
<div style="left:404px;top:353px;width:1px;height:1px;background:#8c8c8c;"></div>
<div style="left:387px;top:360px;width:1px;height:1px;background:#808080;"></div>
<div style="left:388px;top:360px;width:3px;height:1px;background:#f0f0f0;"></div>
<div style="left:391px;top:360px;width:1px;height:1px;background:#686868;"></div>
<div style="left:401px;top:360px;width:3px;height:1px;background:#f0f0f0;"></div>
<div style="left:404px;top:360px;width:1px;height:1px;background:#8c8c8c;"></div>
<div style="left:387px;top:368px;width:1px;height:1px;background:#808080;"></div>
<div style="left:388px;top:368px;width:3px;height:1px;background:#f0f0f0;"></div>
<div style="left:391px;top:368px;width:1px;height:1px;background:#686868;"></div>
<div style="left:401px;top:368px;width:3px;height:1px;background:#f0f0f0;"></div>
<div style="left:404px;top:368px;width:1px;height:1px;background:#8c8c8c;"></div>
<div style="left:387px;top:376px;width:1px;height:1px;background:#808080;"></div>
<div style="left:388px;top:376px;width:3px;height:1px;background:#f0f0f0;"></div>
<div style="left:391px;top:376px;width:1px;height:1px;background:#686868;"></div>
<div style="left:401px;top:376px;width:3px;height:1px;background:#f0f0f0;"></div>
<div style="left:404px;top:376px;width:1px;height:1px;background:#8c8c8c;"></div>
<div style="left:387px;top:384px;width:1px;height:1px;background:#808080;"></div>
<div style="left:388px;top:384px;width:3px;height:1px;background:#f0f0f0;"></div>
<div style="left:391px;top:384px;width:1px;height:1px;background:#686868;"></div>
<div style="left:401px;top:384px;width:3px;height:1px;background:#f0f0f0;"></div>
<div style="left:404px;top:384px;width:1px;height:1px;background:#8c8c8c;"></div>
<div style="left:387px;top:391px;width:1px;height:1px;background:#808080;"></div>
<div style="left:388px;top:391px;width:3px;height:1px;background:#f0f0f0;"></div>
<div style="left:391px;top:391px;width:1px;height:1px;background:#686868;"></div>
<div style="left:401px;top:391px;width:3px;height:1px;background:#f0f0f0;"></div>
<div style="left:404px;top:391px;width:1px;height:1px;background:#8c8c8c;"></div>
<div style="left:387px;top:399px;width:4px;height:1px;background:#f0f0f0;"></div>
<div style="left:391px;top:399px;width:1px;height:1px;background:#707070;"></div>
<div style="left:400px;top:399px;width:1px;height:1px;background:#909090;"></div>
<div style="left:401px;top:399px;width:4px;height:1px;background:#f0f0f0;"></div>
<div style="left:395px;top:213px;width:1px;height:183.0px;background:#1a1a1a;"></div>
<div style="left:396px;top:213px;width:1px;height:183.0px;background:#c6c6c6;"></div>
<div style="left:397px;top:214px;width:1px;height:182.0px;background:#6e6e6e;"></div>
<svg style="left:390px;top:274px" width="13" height="32" viewBox="0 0 13 32"><rect x="0" y="0" width="13" height="32" rx="2" ry="2" fill="#e9f0f6"/><rect x="1.5" y="4.5" width="10" height="11.5" fill="url(#tg1)"/><rect x="1" y="16" width="11" height="1" fill="#20262c"/><rect x="1.5" y="17" width="10" height="10" fill="url(#tg2)"/><path d="M1 27 H12 V30 Q12 32 10 32 H3 Q1 32 1 30 Z" fill="#8a9aab"/></svg>
<span class="t" style="left:410.50px;top:208px;font-size:7.2px;line-height:9px;height:9px;color:#fff;transform:scaleX(0.9791);">2,40 KW</span>
<span class="t" style="left:410.50px;top:257px;font-size:7.2px;line-height:9px;height:9px;color:#fff;transform:scaleX(0.9791);">1,80 KW</span>
<span class="t" style="left:410.50px;top:303px;font-size:7.2px;line-height:9px;height:9px;color:#fff;transform:scaleX(0.9791);">1,20 KW</span>
<span class="t" style="left:410.50px;top:349px;font-size:7.2px;line-height:9px;height:9px;color:#fff;transform:scaleX(0.9767);">600 W</span>
<span class="t" style="left:410.50px;top:373px;font-size:7.2px;line-height:9px;height:9px;color:#fff;transform:scaleX(0.9767);">300 W</span>
<span class="t" style="left:410.50px;top:395px;font-size:7.2px;line-height:9px;height:9px;color:#fff;transform:scaleX(0.8850);">1 W</span>
<div style="left:386px;top:414px;width:21px;height:20px;background:#cdcdcd;"></div>
<svg style="left:386px;top:414px" width="21" height="20"><polygon points="4.0,5 15.4,5 9.7,15.2" fill="#000"/></svg>
<div style="left:383px;top:441px;width:34px;height:18px;background:#fff;border:1px solid #9a9a9a;box-sizing:border-box"></div>
<span class="t" style="left:385.50px;top:443px;font-size:10.5px;line-height:12px;height:12px;color:#000;transform:scaleX(0.9354);">1400</span>
<span class="t" style="left:380.10px;top:464px;font-size:11px;line-height:12px;height:12px;color:#fff;font-weight:bold;transform:scaleX(0.9193);">W PEAK</span>
<div style="left:457px;top:165px;width:11px;height:11px;background:#f2f2f2;border:1px solid #f0f0f0;box-sizing:border-box;background:linear-gradient(135deg,#cfd3d8 0%,#e6e8ea 45%,#fbfbfb 100%);box-shadow:inset 0 0 0 1px #a8a8a8"></div>
<span class="t" style="left:472.30px;top:165px;font-size:11px;line-height:12px;height:12px;color:#fff;transform:scaleX(0.9405);">Auto TC</span>
<span class="t" style="left:456.30px;top:192px;font-size:9.8px;line-height:11px;height:11px;color:#fff;font-weight:bold;letter-spacing:-0.492px;transform:scaleX(0.8600);">ATTACK</span>
<div style="left:456px;top:210px;width:34px;height:20px;background:#fff;border:1px solid #9a9a9a;box-sizing:border-box"></div>
<span class="t" style="left:459.00px;top:213px;font-size:12px;line-height:14px;height:14px;color:#000;transform:scaleX(0.8571);">5</span>
<svg style="left:491px;top:210px" width="13" height="20" viewBox="0 0 13 20"><rect x="0" y="0" width="13" height="8.9" rx="3.4" fill="#f8f8f8"/><rect x="0" y="10.2" width="13" height="9.6" rx="3.4" fill="#f8f8f8"/><polygon points="2.9,6.9 10.2,6.9 6.55,3.0" fill="#000"/><polygon points="2.9,13.1 10.2,13.1 6.55,17.0" fill="#000"/></svg>
<span class="t" style="left:506.20px;top:215px;font-size:11px;line-height:12px;height:12px;color:#fff;font-weight:bold;transform:scaleX(1.0899);">ms</span>
<span class="t" style="left:456.30px;top:239px;font-size:9.8px;line-height:11px;height:11px;color:#fff;font-weight:bold;transform:scaleX(0.8665);">RELEASE</span>
<div style="left:456px;top:255px;width:34px;height:20px;background:#fff;border:1px solid #9a9a9a;box-sizing:border-box"></div>
<span class="t" style="left:459.00px;top:258px;font-size:12px;line-height:14px;height:14px;color:#000;transform:scaleX(0.9507);">80</span>
<svg style="left:491px;top:255px" width="13" height="20" viewBox="0 0 13 20"><rect x="0" y="0" width="13" height="8.9" rx="3.4" fill="#f8f8f8"/><rect x="0" y="10.2" width="13" height="9.6" rx="3.4" fill="#f8f8f8"/><polygon points="2.9,6.9 10.2,6.9 6.55,3.0" fill="#000"/><polygon points="2.9,13.1 10.2,13.1 6.55,17.0" fill="#000"/></svg>
<span class="t" style="left:506.20px;top:260px;font-size:11px;line-height:12px;height:12px;color:#fff;font-weight:bold;transform:scaleX(1.0899);">ms</span>
<div style="left:544px;top:108px;width:149px;height:377px;background:transparent;border:1px solid #727272;box-sizing:border-box"></div>
<div style="left:552px;top:104px;width:53px;height:10px;background:#333333;"></div>
<span class="t" style="left:554.20px;top:103px;font-size:10.8px;line-height:12px;height:12px;color:#fff;transform:scaleX(0.9439);">COMMON</span>
<div style="left:553px;top:122px;width:11px;height:11px;background:#f2f2f2;border:1px solid #f0f0f0;box-sizing:border-box;background:linear-gradient(135deg,#cfd3d8 0%,#e6e8ea 45%,#fbfbfb 100%);box-shadow:inset 0 0 0 1px #a8a8a8"></div>
<span class="t" style="left:567.90px;top:122px;font-size:11px;line-height:12px;height:12px;color:#fff;transform:scaleX(0.9297);">Bypass</span>
<div style="left:624px;top:122px;width:11px;height:11px;background:#f2f2f2;border:1px solid #f0f0f0;box-sizing:border-box;background:linear-gradient(135deg,#cfd3d8 0%,#e6e8ea 45%,#fbfbfb 100%);box-shadow:inset 0 0 0 1px #a8a8a8"></div>
<svg style="left:624px;top:122px" width="11" height="11" viewBox="0 0 11 11"><path d="M2.6 5.6 L4.8 8.6 L9.0 2.2" fill="none" stroke="#3a4c9a" stroke-width="1.9"/></svg>
<span class="t" style="left:638.20px;top:122px;font-size:11px;line-height:12px;height:12px;color:#fff;transform:scaleX(0.9734);">Multi-way</span>
<div style="left:548px;top:143px;width:69px;height:338px;background:transparent;border:1px solid #666;box-sizing:border-box"></div>
<div style="left:548px;top:143px;width:69px;height:15px;background:#6b6b6b;"></div>
<span class="t" style="left:567.60px;top:144px;font-size:12.6px;line-height:14px;height:14px;color:#fff;font-weight:bold;letter-spacing:-0.328px;transform:scaleX(0.8600);">KNEE</span>
<div style="left:559px;top:167px;width:21px;height:20px;background:#cdcdcd;"></div>
<svg style="left:559px;top:167px" width="21" height="20"><polygon points="4.0,15 15.4,15 9.7,4.8" fill="#000"/></svg>
<div style="left:560px;top:213px;width:4px;height:1px;background:#f0f0f0;"></div>
<div style="left:564px;top:213px;width:1px;height:1px;background:#707070;"></div>
<div style="left:573px;top:213px;width:1px;height:1px;background:#909090;"></div>
<div style="left:574px;top:213px;width:4px;height:1px;background:#f0f0f0;"></div>
<div style="left:560px;top:234px;width:1px;height:1px;background:#808080;"></div>
<div style="left:561px;top:234px;width:3px;height:1px;background:#f0f0f0;"></div>
<div style="left:564px;top:234px;width:1px;height:1px;background:#686868;"></div>
<div style="left:574px;top:234px;width:3px;height:1px;background:#f0f0f0;"></div>
<div style="left:577px;top:234px;width:1px;height:1px;background:#8c8c8c;"></div>
<div style="left:560px;top:254px;width:1px;height:1px;background:#808080;"></div>
<div style="left:561px;top:254px;width:3px;height:1px;background:#f0f0f0;"></div>
<div style="left:564px;top:254px;width:1px;height:1px;background:#686868;"></div>
<div style="left:574px;top:254px;width:3px;height:1px;background:#f0f0f0;"></div>
<div style="left:577px;top:254px;width:1px;height:1px;background:#8c8c8c;"></div>
<div style="left:560px;top:275px;width:1px;height:1px;background:#808080;"></div>
<div style="left:561px;top:275px;width:3px;height:1px;background:#f0f0f0;"></div>
<div style="left:564px;top:275px;width:1px;height:1px;background:#686868;"></div>
<div style="left:574px;top:275px;width:3px;height:1px;background:#f0f0f0;"></div>
<div style="left:577px;top:275px;width:1px;height:1px;background:#8c8c8c;"></div>
<div style="left:560px;top:295px;width:1px;height:1px;background:#808080;"></div>
<div style="left:561px;top:295px;width:3px;height:1px;background:#f0f0f0;"></div>
<div style="left:564px;top:295px;width:1px;height:1px;background:#686868;"></div>
<div style="left:574px;top:295px;width:3px;height:1px;background:#f0f0f0;"></div>
<div style="left:577px;top:295px;width:1px;height:1px;background:#8c8c8c;"></div>
<div style="left:560px;top:316px;width:1px;height:1px;background:#808080;"></div>
<div style="left:561px;top:316px;width:3px;height:1px;background:#f0f0f0;"></div>
<div style="left:564px;top:316px;width:1px;height:1px;background:#686868;"></div>
<div style="left:574px;top:316px;width:3px;height:1px;background:#f0f0f0;"></div>
<div style="left:577px;top:316px;width:1px;height:1px;background:#8c8c8c;"></div>
<div style="left:560px;top:336px;width:1px;height:1px;background:#808080;"></div>
<div style="left:561px;top:336px;width:3px;height:1px;background:#f0f0f0;"></div>
<div style="left:564px;top:336px;width:1px;height:1px;background:#686868;"></div>
<div style="left:574px;top:336px;width:3px;height:1px;background:#f0f0f0;"></div>
<div style="left:577px;top:336px;width:1px;height:1px;background:#8c8c8c;"></div>
<div style="left:560px;top:357px;width:1px;height:1px;background:#808080;"></div>
<div style="left:561px;top:357px;width:3px;height:1px;background:#f0f0f0;"></div>
<div style="left:564px;top:357px;width:1px;height:1px;background:#686868;"></div>
<div style="left:574px;top:357px;width:3px;height:1px;background:#f0f0f0;"></div>
<div style="left:577px;top:357px;width:1px;height:1px;background:#8c8c8c;"></div>
<div style="left:560px;top:377px;width:1px;height:1px;background:#808080;"></div>
<div style="left:561px;top:377px;width:3px;height:1px;background:#f0f0f0;"></div>
<div style="left:564px;top:377px;width:1px;height:1px;background:#686868;"></div>
<div style="left:574px;top:377px;width:3px;height:1px;background:#f0f0f0;"></div>
<div style="left:577px;top:377px;width:1px;height:1px;background:#8c8c8c;"></div>
<div style="left:560px;top:398px;width:4px;height:1px;background:#f0f0f0;"></div>
<div style="left:564px;top:398px;width:1px;height:1px;background:#707070;"></div>
<div style="left:573px;top:398px;width:1px;height:1px;background:#909090;"></div>
<div style="left:574px;top:398px;width:4px;height:1px;background:#f0f0f0;"></div>
<div style="left:568px;top:213px;width:1px;height:181.95000000000005px;background:#1a1a1a;"></div>
<div style="left:569px;top:213px;width:1px;height:181.95000000000005px;background:#c6c6c6;"></div>
<div style="left:570px;top:214px;width:1px;height:180.95000000000005px;background:#6e6e6e;"></div>
<svg style="left:563px;top:341px" width="13" height="32" viewBox="0 0 13 32"><rect x="0" y="0" width="13" height="32" rx="2" ry="2" fill="#e9f0f6"/><rect x="1.5" y="4.5" width="10" height="11.5" fill="url(#tg1)"/><rect x="1" y="16" width="11" height="1" fill="#20262c"/><rect x="1.5" y="17" width="10" height="10" fill="url(#tg2)"/><path d="M1 27 H12 V30 Q12 32 10 32 H3 Q1 32 1 30 Z" fill="#8a9aab"/></svg>
<span class="t" style="left:585.00px;top:207px;font-size:9.4px;line-height:11px;height:11px;color:#fff;letter-spacing:-0.098px;transform:scaleX(0.8600);">10</span>
<span class="t" style="left:589.50px;top:392px;font-size:9.5px;line-height:11px;height:11px;color:#fff;transform:scaleX(0.8000);">1</span>
<div style="left:559px;top:414px;width:21px;height:20px;background:#cdcdcd;"></div>
<svg style="left:559px;top:414px" width="21" height="20"><polygon points="4.0,5 15.4,5 9.7,15.2" fill="#000"/></svg>
<div style="left:558px;top:442px;width:26px;height:18px;background:#fff;border:1px solid #9a9a9a;box-sizing:border-box"></div>
<span class="t" style="left:560.80px;top:444px;font-size:10.5px;line-height:12px;height:12px;color:#808080;transform:scaleX(0.8000);">3</span>
<span class="t" style="left:585.50px;top:445px;font-size:14px;line-height:16px;height:16px;color:#fff;transform:scaleX(0.9710);">dB</span>
<div style="left:622px;top:143px;width:67px;height:338px;background:transparent;border:1px solid #666;box-sizing:border-box"></div>
<div style="left:622px;top:143px;width:67px;height:13px;background:#6b6b6b;"></div>
<span class="t" style="left:635.60px;top:144px;font-size:11.2px;line-height:12px;height:12px;color:#fff;font-weight:bold;transform:scaleX(1.0250);">Fc (Hz)</span>
<div style="left:633px;top:212px;width:4px;height:1px;background:#f0f0f0;"></div>
<div style="left:637px;top:212px;width:1px;height:1px;background:#707070;"></div>
<div style="left:646px;top:212px;width:1px;height:1px;background:#909090;"></div>
<div style="left:647px;top:212px;width:4px;height:1px;background:#f0f0f0;"></div>
<div style="left:633px;top:221px;width:1px;height:1px;background:#808080;"></div>
<div style="left:634px;top:221px;width:3px;height:1px;background:#f0f0f0;"></div>
<div style="left:637px;top:221px;width:1px;height:1px;background:#686868;"></div>
<div style="left:647px;top:221px;width:3px;height:1px;background:#f0f0f0;"></div>
<div style="left:650px;top:221px;width:1px;height:1px;background:#8c8c8c;"></div>
<div style="left:633px;top:230px;width:1px;height:1px;background:#808080;"></div>
<div style="left:634px;top:230px;width:3px;height:1px;background:#f0f0f0;"></div>
<div style="left:637px;top:230px;width:1px;height:1px;background:#686868;"></div>
<div style="left:647px;top:230px;width:3px;height:1px;background:#f0f0f0;"></div>
<div style="left:650px;top:230px;width:1px;height:1px;background:#8c8c8c;"></div>
<div style="left:633px;top:239px;width:1px;height:1px;background:#808080;"></div>
<div style="left:634px;top:239px;width:3px;height:1px;background:#f0f0f0;"></div>
<div style="left:637px;top:239px;width:1px;height:1px;background:#686868;"></div>
<div style="left:647px;top:239px;width:3px;height:1px;background:#f0f0f0;"></div>
<div style="left:650px;top:239px;width:1px;height:1px;background:#8c8c8c;"></div>
<div style="left:633px;top:248px;width:1px;height:1px;background:#808080;"></div>
<div style="left:634px;top:248px;width:3px;height:1px;background:#f0f0f0;"></div>
<div style="left:637px;top:248px;width:1px;height:1px;background:#686868;"></div>
<div style="left:647px;top:248px;width:3px;height:1px;background:#f0f0f0;"></div>
<div style="left:650px;top:248px;width:1px;height:1px;background:#8c8c8c;"></div>
<div style="left:633px;top:258px;width:1px;height:1px;background:#808080;"></div>
<div style="left:634px;top:258px;width:3px;height:1px;background:#f0f0f0;"></div>
<div style="left:637px;top:258px;width:1px;height:1px;background:#686868;"></div>
<div style="left:647px;top:258px;width:3px;height:1px;background:#f0f0f0;"></div>
<div style="left:650px;top:258px;width:1px;height:1px;background:#8c8c8c;"></div>
<div style="left:633px;top:267px;width:1px;height:1px;background:#808080;"></div>
<div style="left:634px;top:267px;width:3px;height:1px;background:#f0f0f0;"></div>
<div style="left:637px;top:267px;width:1px;height:1px;background:#686868;"></div>
<div style="left:647px;top:267px;width:3px;height:1px;background:#f0f0f0;"></div>
<div style="left:650px;top:267px;width:1px;height:1px;background:#8c8c8c;"></div>
<div style="left:633px;top:276px;width:1px;height:1px;background:#808080;"></div>
<div style="left:634px;top:276px;width:3px;height:1px;background:#f0f0f0;"></div>
<div style="left:637px;top:276px;width:1px;height:1px;background:#686868;"></div>
<div style="left:647px;top:276px;width:3px;height:1px;background:#f0f0f0;"></div>
<div style="left:650px;top:276px;width:1px;height:1px;background:#8c8c8c;"></div>
<div style="left:633px;top:285px;width:1px;height:1px;background:#808080;"></div>
<div style="left:634px;top:285px;width:3px;height:1px;background:#f0f0f0;"></div>
<div style="left:637px;top:285px;width:1px;height:1px;background:#686868;"></div>
<div style="left:647px;top:285px;width:3px;height:1px;background:#f0f0f0;"></div>
<div style="left:650px;top:285px;width:1px;height:1px;background:#8c8c8c;"></div>
<div style="left:633px;top:295px;width:1px;height:1px;background:#808080;"></div>
<div style="left:634px;top:295px;width:3px;height:1px;background:#f0f0f0;"></div>
<div style="left:637px;top:295px;width:1px;height:1px;background:#686868;"></div>
<div style="left:647px;top:295px;width:3px;height:1px;background:#f0f0f0;"></div>
<div style="left:650px;top:295px;width:1px;height:1px;background:#8c8c8c;"></div>
<div style="left:633px;top:304px;width:1px;height:1px;background:#808080;"></div>
<div style="left:634px;top:304px;width:3px;height:1px;background:#f0f0f0;"></div>
<div style="left:637px;top:304px;width:1px;height:1px;background:#686868;"></div>
<div style="left:647px;top:304px;width:3px;height:1px;background:#f0f0f0;"></div>
<div style="left:650px;top:304px;width:1px;height:1px;background:#8c8c8c;"></div>
<div style="left:633px;top:313px;width:1px;height:1px;background:#808080;"></div>
<div style="left:634px;top:313px;width:3px;height:1px;background:#f0f0f0;"></div>
<div style="left:637px;top:313px;width:1px;height:1px;background:#686868;"></div>
<div style="left:647px;top:313px;width:3px;height:1px;background:#f0f0f0;"></div>
<div style="left:650px;top:313px;width:1px;height:1px;background:#8c8c8c;"></div>
<div style="left:633px;top:322px;width:1px;height:1px;background:#808080;"></div>
<div style="left:634px;top:322px;width:3px;height:1px;background:#f0f0f0;"></div>
<div style="left:637px;top:322px;width:1px;height:1px;background:#686868;"></div>
<div style="left:647px;top:322px;width:3px;height:1px;background:#f0f0f0;"></div>
<div style="left:650px;top:322px;width:1px;height:1px;background:#8c8c8c;"></div>
<div style="left:633px;top:331px;width:1px;height:1px;background:#808080;"></div>
<div style="left:634px;top:331px;width:3px;height:1px;background:#f0f0f0;"></div>
<div style="left:637px;top:331px;width:1px;height:1px;background:#686868;"></div>
<div style="left:647px;top:331px;width:3px;height:1px;background:#f0f0f0;"></div>
<div style="left:650px;top:331px;width:1px;height:1px;background:#8c8c8c;"></div>
<div style="left:633px;top:341px;width:1px;height:1px;background:#808080;"></div>
<div style="left:634px;top:341px;width:3px;height:1px;background:#f0f0f0;"></div>
<div style="left:637px;top:341px;width:1px;height:1px;background:#686868;"></div>
<div style="left:647px;top:341px;width:3px;height:1px;background:#f0f0f0;"></div>
<div style="left:650px;top:341px;width:1px;height:1px;background:#8c8c8c;"></div>
<div style="left:633px;top:350px;width:1px;height:1px;background:#808080;"></div>
<div style="left:634px;top:350px;width:3px;height:1px;background:#f0f0f0;"></div>
<div style="left:637px;top:350px;width:1px;height:1px;background:#686868;"></div>
<div style="left:647px;top:350px;width:3px;height:1px;background:#f0f0f0;"></div>
<div style="left:650px;top:350px;width:1px;height:1px;background:#8c8c8c;"></div>
<div style="left:633px;top:359px;width:1px;height:1px;background:#808080;"></div>
<div style="left:634px;top:359px;width:3px;height:1px;background:#f0f0f0;"></div>
<div style="left:637px;top:359px;width:1px;height:1px;background:#686868;"></div>
<div style="left:647px;top:359px;width:3px;height:1px;background:#f0f0f0;"></div>
<div style="left:650px;top:359px;width:1px;height:1px;background:#8c8c8c;"></div>
<div style="left:633px;top:368px;width:1px;height:1px;background:#808080;"></div>
<div style="left:634px;top:368px;width:3px;height:1px;background:#f0f0f0;"></div>
<div style="left:637px;top:368px;width:1px;height:1px;background:#686868;"></div>
<div style="left:647px;top:368px;width:3px;height:1px;background:#f0f0f0;"></div>
<div style="left:650px;top:368px;width:1px;height:1px;background:#8c8c8c;"></div>
<div style="left:633px;top:378px;width:1px;height:1px;background:#808080;"></div>
<div style="left:634px;top:378px;width:3px;height:1px;background:#f0f0f0;"></div>
<div style="left:637px;top:378px;width:1px;height:1px;background:#686868;"></div>
<div style="left:647px;top:378px;width:3px;height:1px;background:#f0f0f0;"></div>
<div style="left:650px;top:378px;width:1px;height:1px;background:#8c8c8c;"></div>
<div style="left:633px;top:387px;width:1px;height:1px;background:#808080;"></div>
<div style="left:634px;top:387px;width:3px;height:1px;background:#f0f0f0;"></div>
<div style="left:637px;top:387px;width:1px;height:1px;background:#686868;"></div>
<div style="left:647px;top:387px;width:3px;height:1px;background:#f0f0f0;"></div>
<div style="left:650px;top:387px;width:1px;height:1px;background:#8c8c8c;"></div>
<div style="left:633px;top:396px;width:4px;height:1px;background:#f0f0f0;"></div>
<div style="left:637px;top:396px;width:1px;height:1px;background:#707070;"></div>
<div style="left:646px;top:396px;width:1px;height:1px;background:#909090;"></div>
<div style="left:647px;top:396px;width:4px;height:1px;background:#f0f0f0;"></div>
<div style="left:641px;top:211px;width:1px;height:182.0px;background:#1a1a1a;"></div>
<div style="left:642px;top:211px;width:1px;height:182.0px;background:#c6c6c6;"></div>
<div style="left:643px;top:212px;width:1px;height:181.0px;background:#6e6e6e;"></div>
<svg style="left:636px;top:342px" width="13" height="32" viewBox="0 0 13 32"><rect x="0" y="0" width="13" height="32" rx="2" ry="2" fill="#e9f0f6"/><rect x="1.5" y="4.5" width="10" height="11.5" fill="url(#tg1)"/><rect x="1" y="16" width="11" height="1" fill="#20262c"/><rect x="1.5" y="17" width="10" height="10" fill="url(#tg2)"/><path d="M1 27 H12 V30 Q12 32 10 32 H3 Q1 32 1 30 Z" fill="#8a9aab"/></svg>
<span class="t" style="left:656.30px;top:206px;font-size:9.4px;line-height:11px;height:11px;color:#fff;transform:scaleX(0.9009);">20K</span>
<span class="t" style="left:656.30px;top:391px;font-size:9.5px;line-height:11px;height:11px;color:#fff;transform:scaleX(0.9627);">20</span>
<div style="left:629px;top:442px;width:35px;height:18px;background:#fff;border:1px solid #9a9a9a;box-sizing:border-box"></div>
<span class="t" style="left:632.00px;top:444px;font-size:10.5px;line-height:12px;height:12px;color:#000;transform:scaleX(0.9050);">180</span>
<span class="t" style="left:667.42px;top:444px;font-size:13px;line-height:15px;height:15px;color:#fff;transform:scaleX(1.0773);">Hz</span>
<div style="left:695px;top:107px;width:2px;height:380px;background:#636363;"></div>
<div style="left:715px;top:106px;width:211px;height:219px;background:#555555;"></div>
<div style="left:723px;top:114px;width:15px;height:12px;background:#7f7f7f;"></div>
<span class="t" style="left:742.60px;top:114px;font-size:11.2px;line-height:12px;height:12px;color:#fff;letter-spacing:-0.106px;transform:scaleX(0.8600);">RMS</span>
<div style="left:781px;top:118px;width:15px;height:3px;background:#fff;"></div>
<span class="t" style="left:802.50px;top:113px;font-size:11.2px;line-height:12px;height:12px;color:#fff;letter-spacing:-0.014px;transform:scaleX(0.8600);">Peak LF</span>
<div style="left:856px;top:118px;width:15px;height:3px;background:#000;"></div>
<span class="t" style="left:876.60px;top:113px;font-size:11.2px;line-height:12px;height:12px;color:#fff;transform:scaleX(0.8836);">Peak HF</span>
<svg style="left:715px;top:106px" width="212" height="218" viewBox="0 0 212 218"><rect x="47.5" y="28.5" width="158.0" height="154.0" fill="#4f4f4f"/><polygon points="47.5,182.5 165.9,64.9 169.4,61.5 173.5,57.2 177.0,54.3 181.0,52.6 187.5,51.0 205.5,51.0 205.5,182.5" fill="#808080"/><line x1="76.5" y1="29" x2="76.5" y2="182.5" stroke="#8e8e8e" stroke-width="1" stroke-dasharray="1 3" shape-rendering="crispEdges"/><line x1="48" y1="155.5" x2="205.5" y2="155.5" stroke="#8e8e8e" stroke-width="1" stroke-dasharray="1 3" shape-rendering="crispEdges"/><line x1="102.5" y1="29" x2="102.5" y2="182.5" stroke="#8e8e8e" stroke-width="1" stroke-dasharray="1 3" shape-rendering="crispEdges"/><line x1="48" y1="129.5" x2="205.5" y2="129.5" stroke="#8e8e8e" stroke-width="1" stroke-dasharray="1 3" shape-rendering="crispEdges"/><line x1="129.5" y1="29" x2="129.5" y2="182.5" stroke="#8e8e8e" stroke-width="1" stroke-dasharray="1 3" shape-rendering="crispEdges"/><line x1="48" y1="102.5" x2="205.5" y2="102.5" stroke="#8e8e8e" stroke-width="1" stroke-dasharray="1 3" shape-rendering="crispEdges"/><line x1="155.5" y1="29" x2="155.5" y2="182.5" stroke="#8e8e8e" stroke-width="1" stroke-dasharray="1 3" shape-rendering="crispEdges"/><line x1="48" y1="76.5" x2="205.5" y2="76.5" stroke="#8e8e8e" stroke-width="1" stroke-dasharray="1 3" shape-rendering="crispEdges"/><line x1="182.5" y1="29" x2="182.5" y2="182.5" stroke="#8e8e8e" stroke-width="1" stroke-dasharray="1 3" shape-rendering="crispEdges"/><line x1="48" y1="49.5" x2="205.5" y2="49.5" stroke="#8e8e8e" stroke-width="1" stroke-dasharray="1 3" shape-rendering="crispEdges"/><polyline points="166.6,64.6 167.6,63.6 170.5,60.6 172.8,58.6 176.2,57.3 180.6,56.2 183.5,55.5 205.5,55.5" fill="none" stroke="#fff" stroke-width="1.5"/><polyline points="47.5,182.5 171.3,62.0 173.6,60.5 177.0,59.4 205.5,59.4" fill="none" stroke="#000" stroke-width="1.2"/><rect x="47.5" y="28.5" width="158.0" height="154.0" fill="none" stroke="#000" stroke-width="1"/><line x1="49.5" y1="183.0" x2="49.5" y2="189.0" stroke="#8a8a8a" stroke-width="1" shape-rendering="crispEdges"/><line x1="41.0" y1="182.5" x2="47.0" y2="182.5" stroke="#8a8a8a" stroke-width="1" shape-rendering="crispEdges"/><line x1="76.5" y1="183.0" x2="76.5" y2="189.0" stroke="#8a8a8a" stroke-width="1" shape-rendering="crispEdges"/><line x1="41.0" y1="155.5" x2="47.0" y2="155.5" stroke="#8a8a8a" stroke-width="1" shape-rendering="crispEdges"/><line x1="102.5" y1="183.0" x2="102.5" y2="189.0" stroke="#8a8a8a" stroke-width="1" shape-rendering="crispEdges"/><line x1="41.0" y1="129.5" x2="47.0" y2="129.5" stroke="#8a8a8a" stroke-width="1" shape-rendering="crispEdges"/><line x1="129.5" y1="183.0" x2="129.5" y2="189.0" stroke="#8a8a8a" stroke-width="1" shape-rendering="crispEdges"/><line x1="41.0" y1="102.5" x2="47.0" y2="102.5" stroke="#8a8a8a" stroke-width="1" shape-rendering="crispEdges"/><line x1="155.5" y1="183.0" x2="155.5" y2="189.0" stroke="#8a8a8a" stroke-width="1" shape-rendering="crispEdges"/><line x1="41.0" y1="76.5" x2="47.0" y2="76.5" stroke="#8a8a8a" stroke-width="1" shape-rendering="crispEdges"/><line x1="182.5" y1="183.0" x2="182.5" y2="189.0" stroke="#8a8a8a" stroke-width="1" shape-rendering="crispEdges"/><line x1="41.0" y1="49.5" x2="47.0" y2="49.5" stroke="#8a8a8a" stroke-width="1" shape-rendering="crispEdges"/></svg>
<span class="t" style="left:741.70px;top:149px;font-size:11.2px;line-height:12px;height:12px;color:#cecece;transform:scaleX(0.9491);">10</span>
<span class="t" style="left:748.00px;top:176px;font-size:11.2px;line-height:12px;height:12px;color:#cecece;transform:scaleX(0.8833);">0</span>
<span class="t" style="left:737.80px;top:202px;font-size:11.2px;line-height:12px;height:12px;color:#cecece;transform:scaleX(0.9719);">-10</span>
<span class="t" style="left:737.80px;top:229px;font-size:11.2px;line-height:12px;height:12px;color:#cecece;transform:scaleX(0.9719);">-20</span>
<span class="t" style="left:737.80px;top:255px;font-size:11.2px;line-height:12px;height:12px;color:#cecece;transform:scaleX(0.9719);">-30</span>
<span class="t" style="left:737.80px;top:282px;font-size:11.2px;line-height:12px;height:12px;color:#cecece;transform:scaleX(0.9719);">-40</span>
<span class="t" style="left:755.95px;top:297px;font-size:11.2px;line-height:12px;height:12px;color:#cecece;transform:scaleX(0.9719);">-40</span>
<span class="t" style="left:782.95px;top:297px;font-size:11.2px;line-height:12px;height:12px;color:#cecece;transform:scaleX(0.9719);">-30</span>
<span class="t" style="left:808.95px;top:297px;font-size:11.2px;line-height:12px;height:12px;color:#cecece;transform:scaleX(0.9719);">-20</span>
<span class="t" style="left:835.95px;top:297px;font-size:11.2px;line-height:12px;height:12px;color:#cecece;transform:scaleX(0.9719);">-10</span>
<span class="t" style="left:867.75px;top:297px;font-size:11.2px;line-height:12px;height:12px;color:#cecece;transform:scaleX(0.9167);">0</span>
<span class="t" style="left:891.75px;top:297px;font-size:11.2px;line-height:12px;height:12px;color:#cecece;transform:scaleX(0.9409);">10</span>
<span class="t" style="left:816.34px;top:311px;font-size:11.2px;line-height:12px;height:12px;color:#c4c4c4;transform:scaleX(0.9620);">Input dBu</span>
<div style="left:727.6px;top:211.8px;width:0;height:0"><span class="t" style="left:-27px;top:-6.5px;font-size:11.2px;line-height:13px;color:#c4c4c4;transform:rotate(-90deg) scaleX(0.93);transform-origin:27px 6.5px;width:54px;text-align:center">Output dBu</span></div>
<span class="t" style="left:933.10px;top:105px;font-size:11px;line-height:12px;height:12px;color:#fff;font-weight:bold;transform:scaleX(0.9393);">OUT SELECT</span>
<div style="left:933px;top:130px;width:13px;height:13px;background:#0d3a0d;"></div>
<svg style="left:931px;top:128px" width="17" height="17"><circle cx="8.6" cy="8.5" r="6.15" fill="#fff"/><circle cx="8.6" cy="8.5" r="3.5" fill="#2e2e2e"/></svg>
<span class="t" style="left:951.10px;top:130px;font-size:12.3px;line-height:14px;height:14px;color:#fff;font-weight:bold;transform:scaleX(0.8975);">CHANNEL A</span>
<div style="left:933px;top:151px;width:13px;height:13px;background:#0d3a0d;"></div>
<svg style="left:931px;top:149px" width="17" height="17"><circle cx="8.6" cy="8.4" r="6.15" fill="#fff"/></svg>
<span class="t" style="left:951.10px;top:151px;font-size:12.3px;line-height:14px;height:14px;color:#fff;font-weight:bold;transform:scaleX(0.8975);">CHANNEL B</span>
<div style="left:933px;top:172px;width:13px;height:13px;background:#0d3a0d;"></div>
<svg style="left:931px;top:170px" width="17" height="17"><circle cx="8.6" cy="8.3" r="6.15" fill="#fff"/></svg>
<span class="t" style="left:951.10px;top:172px;font-size:12.3px;line-height:14px;height:14px;color:#fff;font-weight:bold;transform:scaleX(0.8975);">CHANNEL C</span>
<div style="left:933px;top:193px;width:13px;height:13px;background:#0d3a0d;"></div>
<svg style="left:931px;top:191px" width="17" height="17"><circle cx="8.6" cy="8.2" r="6.15" fill="#fff"/></svg>
<span class="t" style="left:951.10px;top:193px;font-size:12.3px;line-height:14px;height:14px;color:#fff;font-weight:bold;transform:scaleX(0.8975);">CHANNEL D</span>
<div style="left:714px;top:336px;width:306px;height:2px;background:#676767;"></div>
<span class="t" style="left:715.00px;top:341px;font-size:11px;line-height:12px;height:12px;color:#fff;font-weight:bold;transform:scaleX(0.9521);">AMPLIFIER INFORMATION</span>
<div style="left:715px;top:356px;width:246px;height:126px;background:#fff;border:1px solid #c4c4c4;border-top-color:#9c9c9c;box-sizing:border-box"></div>
<span class="t" style="left:717.70px;top:359px;font-size:11px;line-height:12px;height:12px;color:#8b8b8b;font-weight:bold;transform:scaleX(1.0699);">Max. Input (dBu): 9,4 dBu</span>
<span class="t" style="left:717.70px;top:372px;font-size:11px;line-height:12px;height:12px;color:#8b8b8b;font-weight:bold;transform:scaleX(1.0855);">Max. Output (RMS): 91,0 V | 1000 W</span>
<span class="t" style="left:717.70px;top:398px;font-size:11px;line-height:12px;height:12px;color:#8b8b8b;font-weight:bold;transform:scaleX(1.0536);">Peak Dyn. (Low Freq)</span>
<span class="t" style="left:717.70px;top:411px;font-size:11px;line-height:12px;height:12px;color:#8b8b8b;font-weight:bold;transform:scaleX(1.0699);">Max. Input (dBu): 7,8 dBu</span>
<span class="t" style="left:717.70px;top:424px;font-size:11px;line-height:12px;height:12px;color:#8b8b8b;font-weight:bold;transform:scaleX(1.0996);">Max. Output (Peak): 107,0 V | 1400 W</span>
<span class="t" style="left:717.70px;top:437px;font-size:11px;line-height:12px;height:12px;color:#8b8b8b;font-weight:bold;transform:scaleX(1.0573);">Peak Dyn. (High Freq)</span>
<span class="t" style="left:717.70px;top:450px;font-size:11px;line-height:12px;height:12px;color:#8b8b8b;font-weight:bold;transform:scaleX(1.0699);">Max. Input (dBu): 6,4 dBu</span>
<span class="t" style="left:717.70px;top:463px;font-size:11px;line-height:12px;height:12px;color:#8b8b8b;font-weight:bold;transform:scaleX(1.0965);">Max. Output (Peak): 91,1 V | 1000 W</span>
<span class="t" style="left:967.00px;top:363px;font-size:11px;line-height:12px;height:12px;color:#fff;font-weight:bold;transform:scaleX(0.9182);">SPK Z</span>
<div style="left:966px;top:379px;width:56px;height:24px;background:#fff;border:1px solid #d8d8d8;box-sizing:border-box;border-radius:2px"></div>
<span class="t" style="left:970.60px;top:384px;font-size:13px;line-height:15px;height:15px;color:#000;transform:scaleX(0.9333);">8,00</span>
<svg style="left:1008px;top:386px" width="12" height="10" viewBox="0 0 12 10"><path d="M1.3 4.1 L5.3 8.2 L9.3 4.1" fill="none" stroke="#555" stroke-width="1"/></svg>
</body></html>
